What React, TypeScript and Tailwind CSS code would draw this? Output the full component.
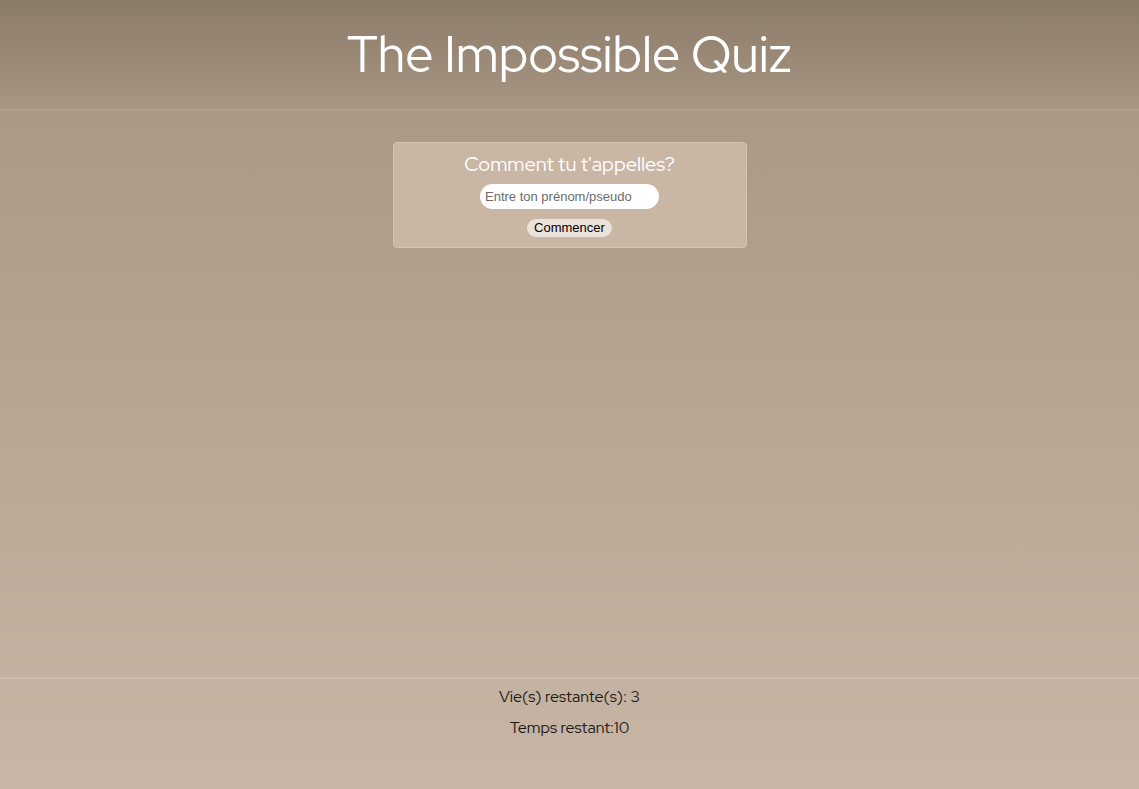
import React from "react";

export default function App() {
  return (
    <div
      className="flex min-h-[789px] w-full flex-col bg-gradient-to-b from-[#8b7b69] via-[#ab9886] via-[15%] to-[#c8b6a6]"
      style={{ fontFamily: '"Red Hat Display", Lato, "Noto Sans", sans-serif' }}
    >
      <header className="flex h-[111px] items-center justify-center border-b-2 border-[#b3a08e]">
        <h1 className="pb-[2px] text-[50px] font-normal leading-none text-white">The Impossible Quiz</h1>
      </header>
      <main className="flex h-[566px] flex-col items-center pt-[31px]">
        <div className="flex h-[106px] w-[354px] flex-col items-center rounded-[4px] border border-[#d4c4b6] bg-[#c9b6a5] pt-[8px]">
          <h2 className="text-[20px] leading-[26px] text-white">Comment tu t'appelles?</h2>
          <input
            type="text"
            placeholder="Entre ton prénom/pseudo"
            className="mt-[7px] h-[25px] w-[179px] rounded-full bg-white px-[5px] text-[13px] text-black outline-none placeholder:text-[#6b6b6b]"
            style={{ fontFamily: '"Liberation Sans", Arial, sans-serif' }}
          />
          <button
            className="mt-[10px] h-[18px] rounded-full bg-[#ebe2db] px-[7px] text-[13px] leading-[18px] text-black"
            style={{ fontFamily: '"Liberation Sans", Arial, sans-serif' }}
          >
            Commencer
          </button>
        </div>
      </main>
      <footer className="flex flex-col items-center border-t-2 border-[#d0bfb1] pt-[7px] text-[16px] text-[#1f1a16]">
        <p className="leading-[22px]">Vie(s) restante(s): 3</p>
        <p className="mt-[9px] leading-[22px]">Temps restant:10</p>
      </footer>
    </div>
  );
}
